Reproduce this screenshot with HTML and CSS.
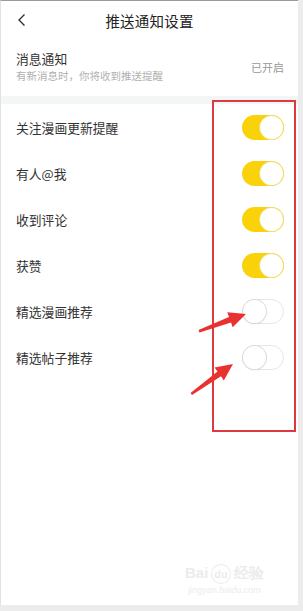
FILE: index.html
```html
<!DOCTYPE html>
<html lang="zh">
<head>
<meta charset="utf-8">
<link rel="stylesheet" href="styles.css">
</head>
<body>
<div class="app">
  <header class="topbar">
    <svg class="back" width="10" height="14" viewBox="0 0 10 14"><path d="M7.5 1.5 L2 7 L7.5 12.5" fill="none" stroke="#333" stroke-width="1.4"/></svg>
    <h1 class="title">推送通知设置</h1>
  </header>
  <section class="master">
    <div class="master-text">
      <div class="master-title">消息通知</div>
      <div class="master-sub">有新消息时，你将收到推送提醒</div>
    </div>
    <div class="master-state">已开启</div>
  </section>
  <div class="band"></div>
  <ul class="list">
    <li class="row"><span>关注漫画更新提醒</span><span class="toggle on"><i></i></span></li>
    <li class="row"><span>有人@我</span><span class="toggle on"><i></i></span></li>
    <li class="row"><span>收到评论</span><span class="toggle on"><i></i></span></li>
    <li class="row"><span>获赞</span><span class="toggle on"><i></i></span></li>
    <li class="row"><span>精选漫画推荐</span><span class="toggle off"><i></i></span></li>
    <li class="row"><span>精选帖子推荐</span><span class="toggle off"><i></i></span></li>
  </ul>
  <div class="redbox"></div>
  <svg class="arrows" width="298" height="605" viewBox="0 0 298 605">
    <polygon points="197.5,329 228,316 226.3,311.3 245,313 231.7,326.3 230,321.6 198.5,331.5" fill="#e8322f"/>
    <polygon points="189.5,392 216.5,370.5 213.6,366.4 232,363 222.8,379.4 220,375.3 191,394" fill="#e8322f"/>
  </svg>
  <div class="watermark">
    <div class="wm-logo">Bai<span class="wm-du">du</span>经验</div>
    <div class="wm-url">jingyan.baidu.com</div>
  </div>
</div>
</body>
</html>
```
FILE: styles.css
```css
* { box-sizing: border-box; }
html, body { margin: 0; padding: 0; }
body {
  background: #ececec;
  font-family: "Noto Sans CJK SC", "Noto Sans", sans-serif;
  width: 303px;
  height: 611px;
  overflow: hidden;
}
.app {
  position: relative;
  width: 298px;
  height: 605px;
  background: #fff;
  border-top: 1px solid #9a9a9a;
  border-left: 1px solid #e2e2e2;
}
.topbar {
  height: 39px;
  display: flex;
  align-items: center;
  justify-content: center;
  position: relative;
}
.back {
  position: absolute;
  left: 16px;
  top: 12px;
}
.title {
  margin: 0;
  font-size: 14.5px;
  font-weight: normal;
  color: #222;
  letter-spacing: 0.2px;
}
.master {
  height: 56px;
  display: flex;
  align-items: center;
  justify-content: space-between;
  padding: 0 14px 0 15px;
}
.master-text { display: flex; flex-direction: column; gap: 2px; margin-top: -2px; }
.master-title { font-size: 12.8px; color: #333; line-height: 16px; }
.master-sub { font-size: 10.5px; color: #b0b0b0; line-height: 14px; }
.master-state { font-size: 11px; color: #999; margin-top: -3px; }
.band {
  height: 8px;
  background: #f4f6f6;
}
.list { list-style: none; margin: 0; padding: 0; }
.row {
  height: 46px;
  display: flex;
  align-items: center;
  justify-content: space-between;
  padding: 0 14px 0 15px;
  font-size: 12.8px;
  color: #333;
}
.toggle {
  position: relative;
  width: 42px;
  height: 25px;
  border-radius: 13px;
  display: block;
}
.toggle i {
  position: absolute;
  top: 1px;
  width: 23px;
  height: 23px;
  border-radius: 50%;
  background: #fff;
}
.toggle.on { background: #f9d20a; }
.toggle.on i { right: 1px; box-shadow: 0 0 0 1px #f0dc6a; }
.toggle.off { background: #fff; border: 1px solid #e6e6e6; }
.toggle.off i { left: 0; top: 0; box-shadow: 0 0 0 1px #dcdcdc, 0 1px 2px rgba(0,0,0,0.12); }
.redbox {
  position: absolute;
  left: 211px;
  top: 99px;
  width: 84px;
  height: 332px;
  border: 2.5px solid #dc3a3e;
}
.arrows { position: absolute; left: 0; top: 0; }
.watermark {
  position: absolute;
  left: 184px;
  top: 563px;
  color: #ececec;
  font-family: "Liberation Sans", sans-serif;
  text-align: center;
}
.wm-logo { font-size: 15px; font-weight: bold; line-height: 18px; }
.wm-du { display: inline-block; border: 1px solid #ececec; border-radius: 50%; font-size: 11px; padding: 0 2px; margin: 0 3px; }
.wm-url { font-size: 9px; line-height: 12px; }
```
